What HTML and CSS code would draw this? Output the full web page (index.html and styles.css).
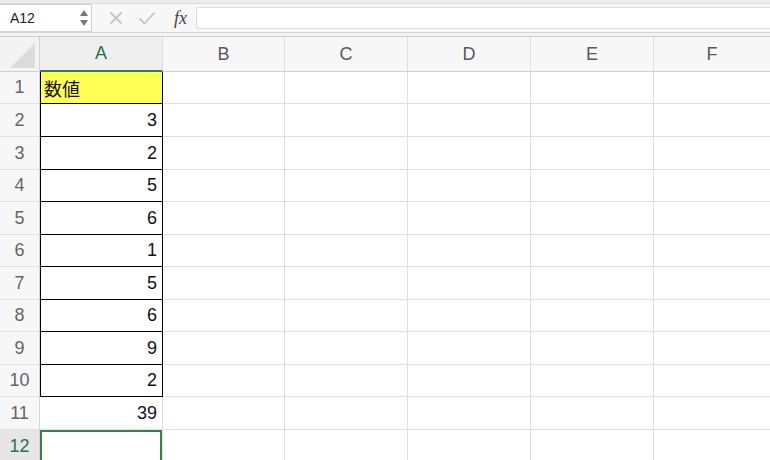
FILE: index.html
```html
<!DOCTYPE html>
<html lang="ja">
<head>
<meta charset="utf-8">
<link rel="stylesheet" href="styles.css">
</head>
<body>
<div class="app">
  <div class="topstrip"></div>
  <div class="fbar">
    <div class="namebox">
      <span class="ref">A12</span>
      <svg class="spin" width="8" height="18" viewBox="0 0 8 18"><polygon points="4,1 8,7 0,7" fill="#777"/><polygon points="0,11 8,11 4,17" fill="#777"/></svg>
    </div>
    <div class="fbtns">
      <svg class="ic" width="16" height="16" viewBox="0 0 16 16"><path d="M2.5 2.5 L13.5 13.5 M13.5 2.5 L2.5 13.5" stroke="#c4c4c4" stroke-width="1.8" fill="none"/></svg>
      <svg class="ic" width="18" height="16" viewBox="0 0 18 16"><path d="M1.5 8.5 L6.5 13.5 L16.5 2.5" stroke="#c4c4c4" stroke-width="1.8" fill="none"/></svg>
      <span class="fx">fx</span>
    </div>
    <div class="finput"></div>
  </div>
  <div class="sep"></div>
  <div class="grid">
    <div class="corner"><svg width="40" height="35" viewBox="0 0 40 35"><polygon points="35,6 35,31 10,31" fill="#dcdcdc"/></svg></div>
    <div class="ch sel">A</div>
    <div class="ch">B</div>
    <div class="ch">C</div>
    <div class="ch">D</div>
    <div class="ch">E</div>
    <div class="ch last">F</div>

    <div class="rh">1</div><div class="c bx hd">数値</div><div class="c"></div><div class="c"></div><div class="c"></div><div class="c"></div><div class="c last"></div>
    <div class="rh">2</div><div class="c bx num">3</div><div class="c"></div><div class="c"></div><div class="c"></div><div class="c"></div><div class="c last"></div>
    <div class="rh">3</div><div class="c bx num">2</div><div class="c"></div><div class="c"></div><div class="c"></div><div class="c"></div><div class="c last"></div>
    <div class="rh">4</div><div class="c bx num">5</div><div class="c"></div><div class="c"></div><div class="c"></div><div class="c"></div><div class="c last"></div>
    <div class="rh">5</div><div class="c bx num">6</div><div class="c"></div><div class="c"></div><div class="c"></div><div class="c"></div><div class="c last"></div>
    <div class="rh">6</div><div class="c bx num">1</div><div class="c"></div><div class="c"></div><div class="c"></div><div class="c"></div><div class="c last"></div>
    <div class="rh">7</div><div class="c bx num">5</div><div class="c"></div><div class="c"></div><div class="c"></div><div class="c"></div><div class="c last"></div>
    <div class="rh">8</div><div class="c bx num">6</div><div class="c"></div><div class="c"></div><div class="c"></div><div class="c"></div><div class="c last"></div>
    <div class="rh">9</div><div class="c bx num">9</div><div class="c"></div><div class="c"></div><div class="c"></div><div class="c"></div><div class="c last"></div>
    <div class="rh">10</div><div class="c bx num">2</div><div class="c"></div><div class="c"></div><div class="c"></div><div class="c"></div><div class="c last"></div>
    <div class="rh">11</div><div class="c num">39</div><div class="c"></div><div class="c"></div><div class="c"></div><div class="c"></div><div class="c last"></div>
    <div class="rh rsel">12</div><div class="c active"></div><div class="c"></div><div class="c"></div><div class="c"></div><div class="c"></div><div class="c last"></div>
  </div>
</div>
</body>
</html>
```
FILE: styles.css
```css
* { box-sizing: border-box; }
html, body { margin: 0; padding: 0; background: #fff; }
body { font-family: "Liberation Sans", "Noto Sans CJK JP", sans-serif; width: 770px; height: 460px; overflow: hidden; }

.topstrip { height: 4px; background: #ececec; border-bottom: 1px solid #dadada; }
.fbar { height: 29px; background: #f7f7f7; display: flex; align-items: center; border-bottom: 1px solid #d6d6d6; }
.namebox { width: 92px; height: 28px; background: #fff; border: 1px solid #d2d2d2; border-left: none; display: flex; align-items: center; justify-content: space-between; padding: 0 3px 0 10px; }
.ref { font-size: 14px; color: #222; }
.spin { display: block; }
.fbtns { display: flex; align-items: center; width: 104px; padding-left: 16px; gap: 14px; }
.ic { display: block; }
.fx { font-family: "Liberation Serif", "DejaVu Serif", serif; font-style: italic; font-size: 18px; color: #444; margin-left: 4px; }
.finput { flex: 1; height: 22px; background: #fff; border: 1px solid #dcdcdc; border-right: none; border-radius: 3px 0 0 3px; }
.sep { height: 4px; background: #f3f3f3; border-bottom: 1px solid #cfcfcf; }

.grid { display: grid; grid-template-columns: 40px 123px 122px 123px 123px 123px 116px;
  grid-template-rows: 35px 32px 33px 33px 32px 33px 32px 33px 32px 33px 32px 33px 33px; }
.corner { background: #f3f3f3; border-right: 1px solid #d4d4d4; border-bottom: 1px solid #cfcfcf; }
.corner svg { display: block; }
.ch { background: #f7f7f7; border-right: 1px solid #dedede; border-bottom: 1px solid #cfcfcf; display: flex; align-items: center; justify-content: center; font-size: 18px; color: #5a5a5a; }
.ch.sel { background: #efefef; color: #2e7146; border-bottom: 2px solid #3b7a4e; }
.ch.last, .c.last { border-right: none; }
.rh { background: #f7f7f7; border-right: 1px solid #d4d4d4; border-bottom: 1px solid #e0e0e0; display: flex; align-items: center; justify-content: center; font-size: 18px; color: #666; }
.rh.rsel { background: #e6e6e6; color: #2e7146; }
.c { border-right: 1px solid #e0e0e0; border-bottom: 1px solid #e0e0e0; font-size: 18px; color: #111; display: flex; align-items: center; padding: 0 4px; }
.c.bx { border-right: 1px solid #000; border-bottom: 1px solid #000; box-shadow: inset 1px 0 0 #000; }
.c.hd { background: #ffff55; justify-content: flex-start; padding-left: 4px; }
.c.num { justify-content: flex-end; padding-right: 5px; }
.c.active { box-shadow: inset 0 0 0 2px #3f7d50; }
```
